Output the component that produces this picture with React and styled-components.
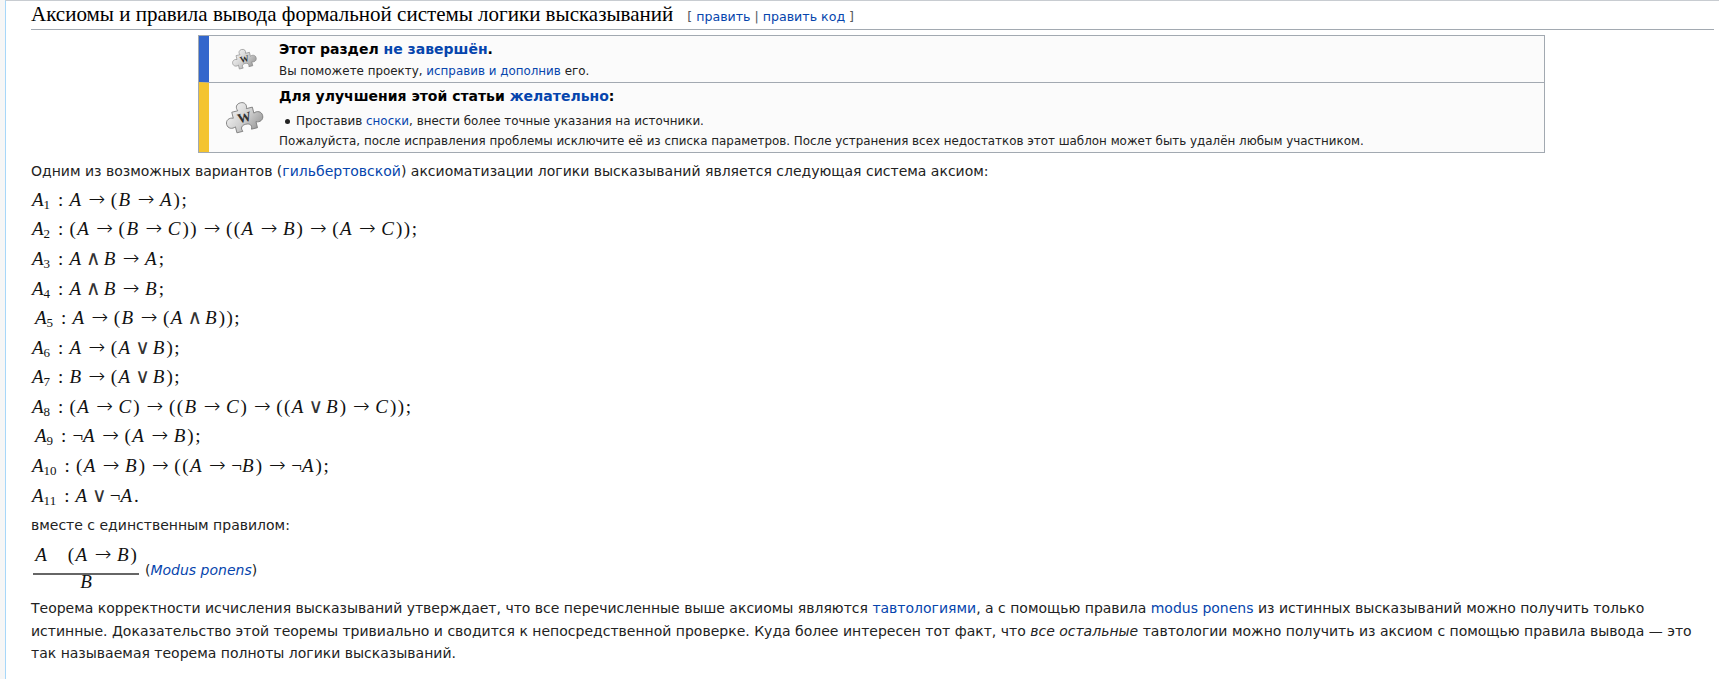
import React from 'react';
import styled, { createGlobalStyle } from 'styled-components';

const GlobalStyle = createGlobalStyle`
  html, body {
    margin: 0;
    padding: 0;
    background: #f6f6f6;
  }
`;

const Page = styled.div`
  height: 679px;
  overflow: hidden;
  margin-left: 5px;
  padding: 1px 5px 0 25px;
  background: #fff;
  border-left: 1px solid #a7d7f9;
  border-top: 1px solid #c8ccd1;
  color: #222;
  font-family: "DejaVu Sans", sans-serif;
  font-size: 14px;
  line-height: 22.4px;
  box-sizing: content-box;
`;

const Heading = styled.div`
  display: flex;
  align-items: baseline;
  height: 27px;
  border-bottom: 1px solid #a2a9b1;
  font-family: "Liberation Serif", serif;
  font-size: 21px;
  line-height: 25px;
  color: #000;
`;

const EditLinks = styled.span`
  margin-left: 14px;
  font-family: "DejaVu Sans", sans-serif;
  font-size: 12.6px;
  color: #54595d;
`;

const Link = styled.a`
  color: #0645ad;
  text-decoration: none;
`;

const NoticeBox = styled.div`
  margin: 5px 0 0 167px;
  width: 1345px;
  border: 1px solid #a2a9b1;
  background: #fbfbfb;
`;

const Notice = styled.div`
  display: flex;
  height: ${p => p.$height}px;
  border-left: 10px solid ${p => p.$accent};
  & + & {
    border-top: 1px solid #a2a9b1;
  }
`;

const NoticeIcon = styled.div`
  flex: none;
  width: 70px;
  display: flex;
  align-items: center;
  justify-content: center;
`;

const NoticeBody = styled.div`
  padding: 2px 0 0;
  font-size: 11.9px;
  line-height: 19px;
`;

const NoticeTitle = styled.div`
  font-size: 14px;
  font-weight: bold;
  line-height: 22px;
  color: #000;
  margin-bottom: ${p => p.$gap}px;
`;

const NoticeItem = styled.div`
  display: flex;
  align-items: center;
  margin-bottom: 1px;
  padding-left: 6px;
  gap: 6px;
  &::before {
    content: '';
    width: 5px;
    height: 5px;
    border-radius: 50%;
    background: #222;
  }
`;

const Paragraph = styled.p`
  margin: ${p => p.$top ?? 7}px 0 0;
`;

const Formula = styled.div`
  height: 22.4px;
  margin-top: 7.2px;
  padding-left: ${p => (p.$shift ? 4 : 1)}px;
  font-family: "Liberation Serif", serif;
  font-size: 19px;
  line-height: 22.4px;
  color: #111;
  white-space: nowrap;
  p + & {
    margin-top: 6.4px;
  }
`;

const Var = styled.i`
  padding-right: 2px;
`;

const Paren = styled.span`
  padding-right: 1.5px;
`;

const Sub = styled.sub`
  margin-left: -2px;
  font-size: 13px;
  line-height: 0;
  vertical-align: -3px;
`;

const Colon = styled.span`
  padding: 0 6px 0 8px;
`;

const ArrowGlyph = styled.span`
  padding: 0 5.5px;
  font-family: "DejaVu Sans", sans-serif;
  font-size: 20px;
  font-weight: 300;
  line-height: 0;
`;

const LogicGlyph = styled.span`
  padding: 0 3px;
  font-family: "DejaVu Serif", serif;
  font-size: 20px;
  line-height: 0;
  color: #333;
`;

const RuleRow = styled.div`
  display: flex;
  align-items: flex-start;
  margin-top: 6px;
  height: 54px;
`;

const Fraction = styled.div`
  display: inline-flex;
  flex-direction: column;
  align-items: center;
  width: 106px;
  margin: 0 6px 0 2px;
  font-family: "Liberation Serif", serif;
  font-size: 19px;
  line-height: 26px;
  color: #111;
`;

const Numerator = styled.div`
  width: 100%;
  padding-bottom: 5px;
  text-align: center;
  border-bottom: 2px solid #666;
  white-space: pre;
`;

const Denominator = styled.i`
  line-height: 14px;
`;

const RuleName = styled.span`
  margin-top: 17px;
`;

const Puzzle = ({ size }) => (
  <svg width={size} height={size * 0.8} viewBox="0 0 50 40">
    <defs>
      <linearGradient id={`pz${size}`} x1="0" y1="0" x2="1" y2="1">
        <stop offset="0" stopColor="#ffffff" />
        <stop offset="0.55" stopColor="#cfcfcf" />
        <stop offset="1" stopColor="#8f8f8f" />
      </linearGradient>
    </defs>
    <g transform="translate(25 20) rotate(-14) scale(0.96) translate(-25 -19)">
      <path
        d="M13 10 H20 C18 6 20 2 25 2 C30 2 32 6 30 10 H37 V17 C41 15 46 17 46 22 C46 27 41 29 37 27 V34 H30 C32 30 30 27 25 27 C20 27 18 30 20 34 H13 V27 C9 29 4 27 4 22 C4 17 9 15 13 17 Z"
        fill={`url(#pz${size})`}
        stroke="#777"
        strokeWidth="0.9"
      />
    </g>
    <text x="18" y="25" fontFamily="Liberation Serif, serif" fontSize="15" fontWeight="bold" fill="#333" transform="rotate(-14 25 20)">W</text>
  </svg>
);

const Arrow = () => <ArrowGlyph>→</ArrowGlyph>;

// tokens: letters are italic, > & | become operators, the rest stays upright
const expr = (source) =>
  source.split('').map((ch, i) => {
    if (ch === '>') return <Arrow key={i} />;
    if (ch === '&') return <LogicGlyph key={i}>∧</LogicGlyph>;
    if (ch === '|') return <LogicGlyph key={i}>∨</LogicGlyph>;
    if (/[ABC]/.test(ch)) return <Var key={i}>{ch}</Var>;
    if (ch === '(' || ch === ')') return <Paren key={i}>{ch}</Paren>;
    return <span key={i}>{ch}</span>;
  });

const axioms = [
  { n: 1, text: 'A>(B>A);' },
  { n: 2, text: '(A>(B>C))>((A>B)>(A>C));' },
  { n: 3, text: 'A&B>A;' },
  { n: 4, text: 'A&B>B;' },
  { n: 5, text: 'A>(B>(A&B));', shift: true },
  { n: 6, text: 'A>(A|B);' },
  { n: 7, text: 'B>(A|B);' },
  { n: 8, text: '(A>C)>((B>C)>((A|B)>C));' },
  { n: 9, text: '¬A>(A>B);', shift: true },
  { n: 10, text: '(A>B)>((A>¬B)>¬A);' },
  { n: 11, text: 'A|¬A.' },
];

const App = () => (
  <>
    <GlobalStyle />
    <Page>
      <Heading>
        Аксиомы и правила вывода формальной системы логики высказываний
        <EditLinks>
          [ <Link>править</Link> | <Link>править код</Link> ]
        </EditLinks>
      </Heading>

      <NoticeBox>
        <Notice $accent="#36c" $height={46}>
          <NoticeIcon>
            <Puzzle size={30} />
          </NoticeIcon>
          <NoticeBody>
            <NoticeTitle $gap={2}>
              Этот раздел <Link>не завершён</Link>.
            </NoticeTitle>
            Вы поможете проекту, <Link>исправив и дополнив</Link> его.
          </NoticeBody>
        </Notice>
        <Notice $accent="#f4c430" $height={69}>
          <NoticeIcon>
            <Puzzle size={46} />
          </NoticeIcon>
          <NoticeBody>
            <NoticeTitle $gap={5}>
              Для улучшения этой статьи <Link>желательно</Link>:
            </NoticeTitle>
            <NoticeItem>
              <span>
                Проставив <Link>сноски</Link>, внести более точные указания на источники.
              </span>
            </NoticeItem>
            Пожалуйста, после исправления проблемы исключите её из списка параметров. После устранения всех недостатков этот шаблон может быть удалён любым участником.
          </NoticeBody>
        </Notice>
      </NoticeBox>

      <Paragraph $top={7}>
        Одним из возможных вариантов (<Link>гильбертовской</Link>) аксиоматизации логики высказываний является следующая система аксиом:
      </Paragraph>

      {axioms.map((a) => (
        <Formula key={a.n} $shift={a.shift}>
          <Var>A</Var>
          <Sub>{a.n}</Sub>
          <Colon>:</Colon>
          {expr(a.text)}
        </Formula>
      ))}

      <Paragraph $top={7}>вместе с единственным правилом:</Paragraph>

      <RuleRow>
        <Fraction>
          <Numerator>
            <Var>A</Var>
            {'    '}<Paren>(</Paren><Var>A</Var>
            <Arrow />
            <Var>B</Var>)
          </Numerator>
          <Denominator>B</Denominator>
        </Fraction>
        <RuleName>
          (<Link><em>Modus ponens</em></Link>)
        </RuleName>
      </RuleRow>

      <Paragraph $top={1}>
        Теорема корректности исчисления высказываний утверждает, что все перечисленные выше аксиомы являются <Link>тавтологиями</Link>, а с помощью правила <Link>modus ponens</Link> из истинных высказываний можно получить только истинные. Доказательство этой теоремы тривиально и сводится к непосредственной проверке. Куда более интересен тот факт, что <em>все остальные</em> тавтологии можно получить из аксиом с помощью правила вывода — это так называемая теорема полноты логики высказываний.
      </Paragraph>
    </Page>
  </>
);

export default App;
